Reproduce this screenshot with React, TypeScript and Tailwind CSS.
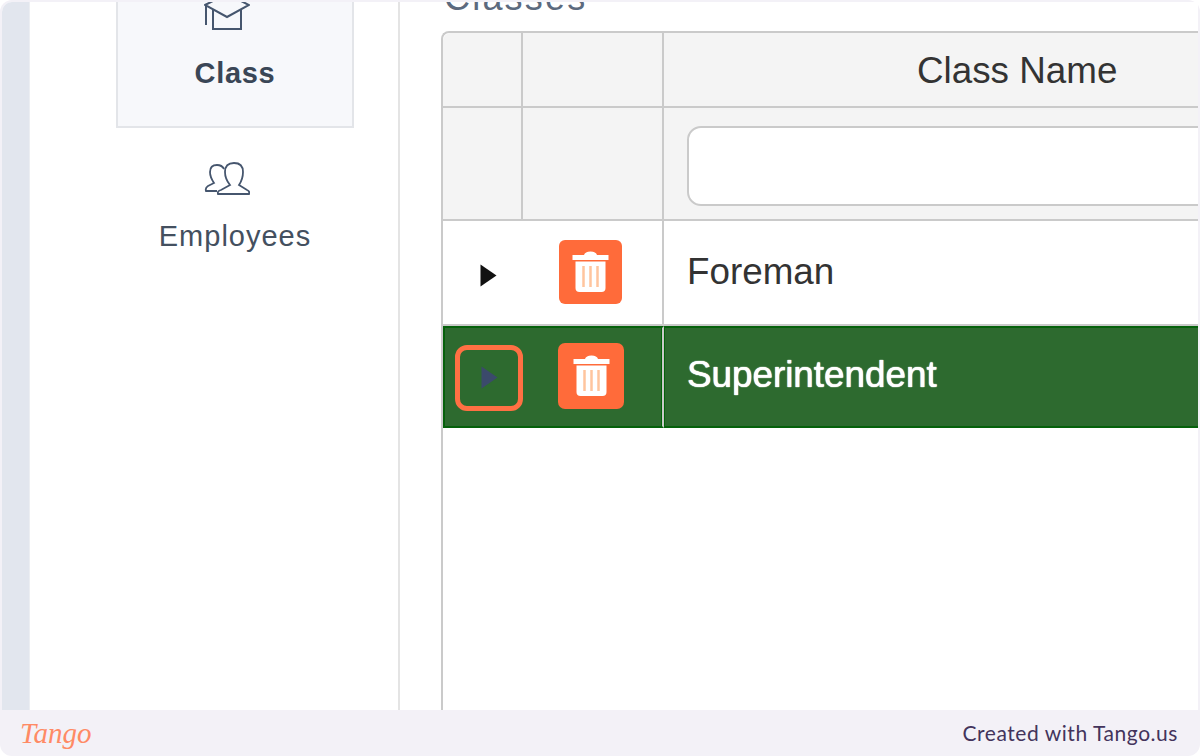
import type { ReactNode } from "react";

function TrashIcon() {
  return (
    <svg width="37" height="42" viewBox="0 0 37 42" fill="none">
      <path d="M0.5 4 H12 Q13 0.5 18.5 0.5 Q24 0.5 25 4 H36.5 V9 H0.5 Z" fill="#fff" />
      <path d="M3.5 10.5 H33.5 V37 Q33.5 41 29.5 41 H7.5 Q3.5 41 3.5 37 Z" fill="#fff" />
      <path d="M11.5 15 V36 M18.5 15 V36 M25.5 15 V36" stroke="#ffc59e" strokeWidth="2.5" />
    </svg>
  );
}

function Triangle({ color }: { color: string }) {
  return (
    <svg width="17" height="23" viewBox="0 0 17 23">
      <path d="M0.5 0.5 L16.5 11.5 L0.5 22.5 Z" fill={color} />
    </svg>
  );
}

function CapIcon() {
  return (
    <svg width="46" height="32" viewBox="0 0 46 32" fill="none" stroke="#46566e" strokeWidth="2">
      <path d="M1 3 L23 -8 L45 3 L23 15 Z" />
      <path d="M9 8 V27 H37 V8" />
      <path d="M2 3 V23" />
    </svg>
  );
}

function PeopleIcon() {
  return (
    <svg width="46" height="34" viewBox="0 0 46 34" fill="none" stroke="#46566e" strokeWidth="1.8">
      <path d="M13 29 H2 Q1 26 4 24 L10 21 Q6 15 6 10 Q6 3 13 3 Q18 3 20 7" />
      <path d="M14 32 Q13 29 17 28 L26 23 Q21 17 21 10 Q21 1 30 1 Q39 1 39 10 Q39 17 35 23 L43 28 Q46 29 45 32 Z" />
    </svg>
  );
}

function Cell({ children, className }: { children?: ReactNode; className: string }) {
  return <div className={`flex items-center ${className}`}>{children}</div>;
}

export default function App() {
  return (
    <div className="h-[756px] w-[1200px] overflow-hidden bg-white font-['Liberation_Sans',sans-serif]">
      <div className="flex h-full flex-col rounded-[12px] bg-[#f3f1f7] px-[2px] pt-[2px]">
        <div className="flex min-h-0 flex-1 overflow-hidden rounded-tl-[10px] bg-white">
          {/* Grey rail */}
          <div className="w-[28px] shrink-0 border-r border-[#eceef2] bg-[#e2e6ee]" />

          {/* Sidebar */}
          <aside className="w-[370px] shrink-0 border-r-2 border-[#e4e4e4] pl-[86px]">
            <div className="flex h-[126px] w-[238px] flex-col items-center border-r-2 border-b-2 border-l-2 border-[#e3e5e9] bg-[#f7f8fb]">
              <div className="mr-[16px] h-[30px]">
                <CapIcon />
              </div>
              <span className="mt-[25px] text-[29px] leading-[32px] font-bold tracking-[0.7px] text-[#3a4656]">Class</span>
            </div>
            <div className="flex w-[238px] flex-col items-center pt-[34px]">
              <div className="mr-[16px]">
                <PeopleIcon />
              </div>
              <span className="mt-[24px] text-[29px] leading-[32px] tracking-[1px] text-[#44505f]">Employees</span>
            </div>
          </aside>

          {/* Table panel */}
          <main className="min-w-0 flex-1 overflow-hidden pl-[41px]">
            <h2 className="-mt-[25px] mb-[13px] pl-[3px] text-[36px] leading-[41px] tracking-[2.2px] text-[#5c6a7e]">Classes</h2>
            <div className="h-[720px] w-[1000px] rounded-tl-[8px] border-t-2 border-l-2 border-[#cacaca] text-[36.8px] text-[#333]">
              <div className="grid grid-cols-[80px_141px_1fr] grid-rows-[75px_113px_105px_102px]">
                <Cell className="rounded-tl-[8px] border-r-2 border-b-2 border-[#cacaca] bg-[#f4f4f4]" />
                <Cell className="border-r-2 border-b-2 border-[#cacaca] bg-[#f4f4f4]" />
                <Cell className="border-b-2 border-[#cacaca] bg-[#f4f4f4] pt-[3px] pl-[253px]">Class Name</Cell>

                <Cell className="border-r-2 border-b-2 border-[#cacaca] bg-[#f4f4f4]" />
                <Cell className="border-r-2 border-b-2 border-[#cacaca] bg-[#f4f4f4]" />
                <Cell className="border-b-2 border-[#cacaca] bg-[#f4f4f4] pt-[5px] pl-[23px]">
                  <input className="h-[80px] w-full rounded-[14px] border-2 border-[#cacaca] bg-white" />
                </Cell>

                <Cell className="justify-center border-b-2 border-[#cacaca] pt-[5px] pl-[10px]">
                  <Triangle color="#111111" />
                </Cell>
                <Cell className="border-r-2 border-b-2 border-[#cacaca] pb-[2px] pl-[36px]">
                  <span className="flex h-[64px] w-[63px] items-center justify-center rounded-[6px] bg-[#ff6b3a]">
                    <TrashIcon />
                  </span>
                </Cell>
                <Cell className="border-b-2 border-[#cacaca] pb-[2px] pl-[23px]">Foreman</Cell>

                <Cell className="relative justify-center border-y-2 border-l-2 border-[#05610b] bg-[#2d6a2f] pl-[10px]">
                  <Triangle color="#3b4a6b" />
                  <span className="absolute top-[17px] left-[10px] h-[66px] w-[68px] rounded-[12px] border-[5px] border-[#ff7043]" />
                </Cell>
                <Cell className="border-y-2 border-r-2 border-y-[#05610b] border-r-[#cacaca] bg-[#2d6a2f] pb-[3px] pl-[35px] shadow-[inset_-1px_0_0_#05610b]">
                  <span className="flex h-[66px] w-[66px] items-center justify-center rounded-[7px] bg-[#ff6b3a]">
                    <TrashIcon />
                  </span>
                </Cell>
                <Cell className="border-y-2 border-[#05610b] bg-[#2d6a2f] pb-[4px] pl-[23px] text-white shadow-[inset_1px_0_0_#05610b] [text-shadow:0_0_1px_#fff,0_0_1px_#fff]">Superintendent</Cell>
              </div>
            </div>
          </main>
        </div>

        <footer className="flex h-[46px] shrink-0 items-center justify-between pr-[20px] pl-[18px]">
          <span className="font-['Liberation_Serif',serif] text-[29px] leading-none text-[#ff8a65] italic">Tango</span>
          <span className="font-['Lato',sans-serif] text-[21px] tracking-[0.55px] text-[#43345c]">Created with Tango.us</span>
        </footer>
      </div>
    </div>
  );
}
